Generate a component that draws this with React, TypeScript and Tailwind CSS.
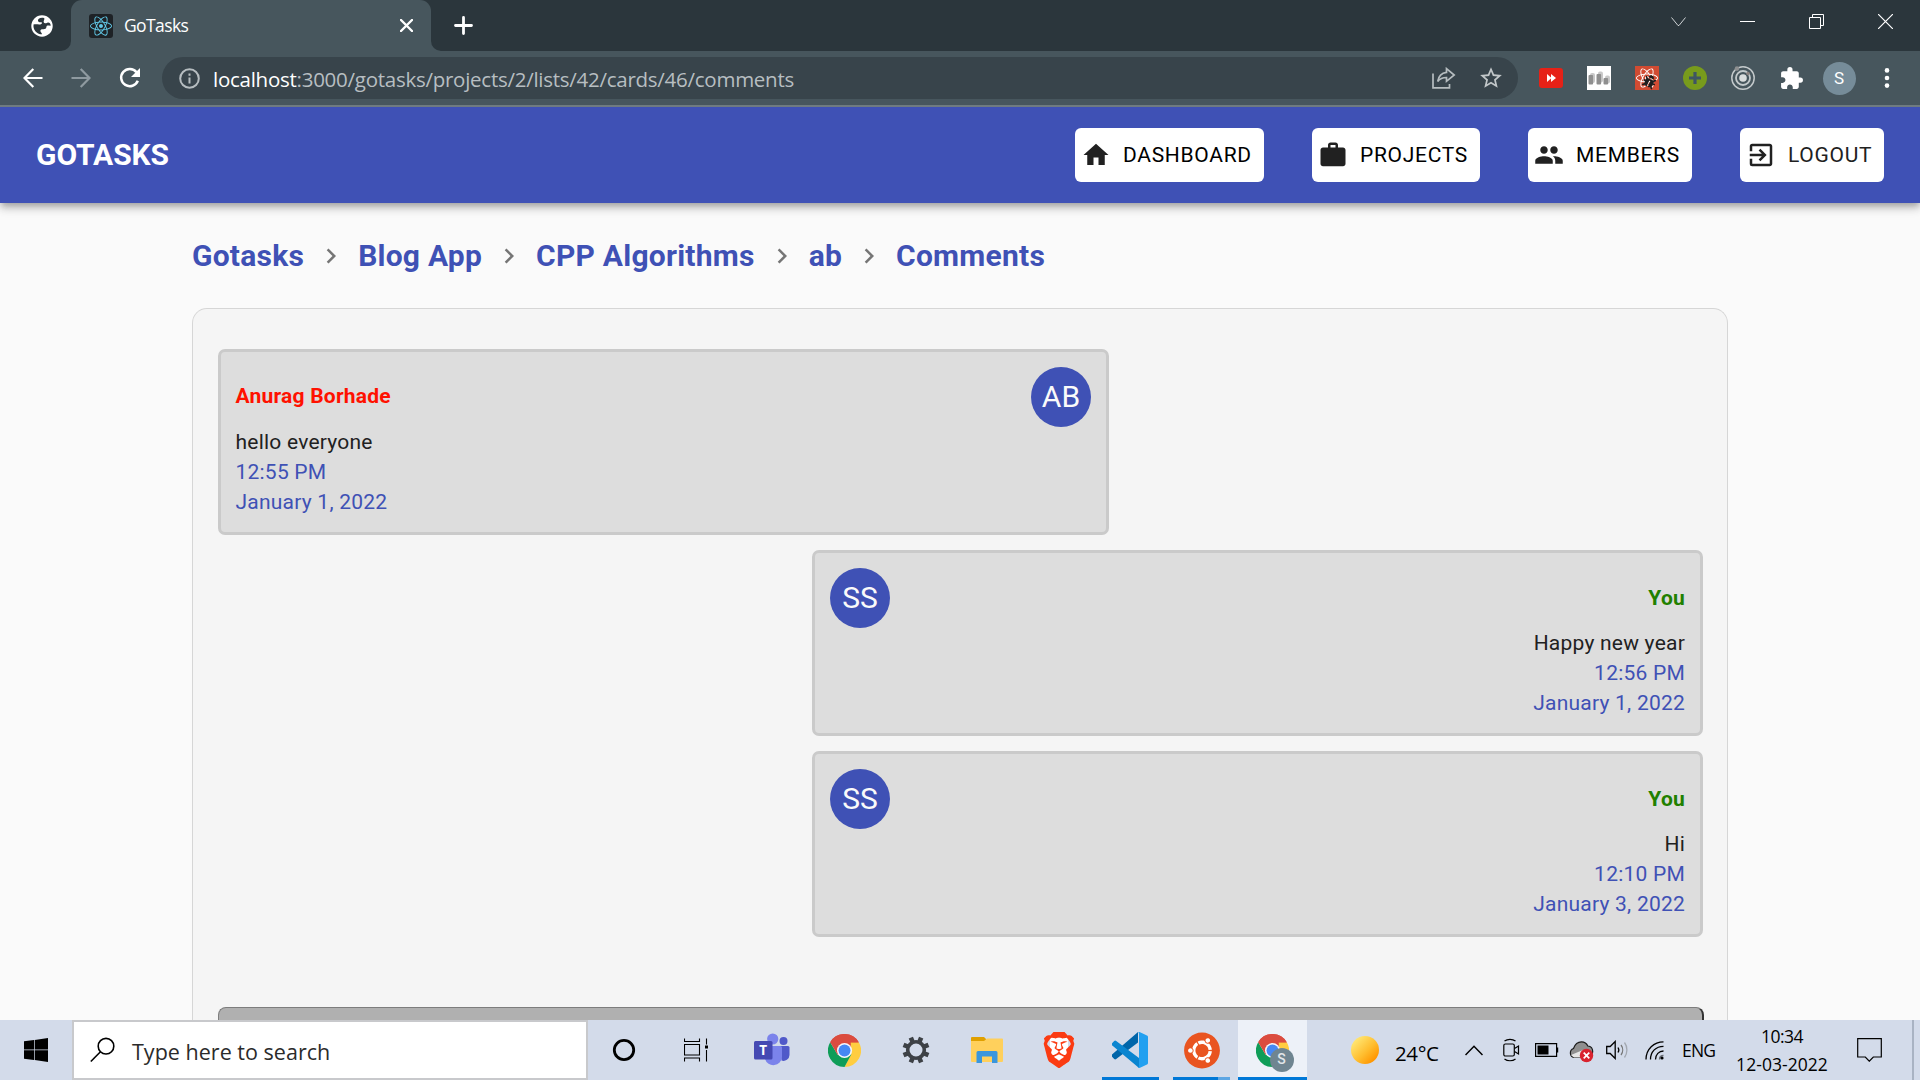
import React from 'react';
import { MdHome, MdWork, MdPeople, MdExitToApp, MdNavigateNext, MdExtension, MdStarBorder } from 'react-icons/md';
import { SiBrave } from 'react-icons/si';
import { FaUbuntu, FaReact, FaBug } from 'react-icons/fa';

const segoe = "font-['Open_Sans','Noto_Sans',sans-serif]";

/* ---------- Browser chrome ---------- */

function WindowControls() {
  const stroke = { fill: 'none', stroke: '#fff', strokeWidth: 1 };
  return (
    <div className="flex h-[43px]">
      <div className="flex w-[69px] items-center justify-center">
        <svg width="15" height="15" viewBox="0 0 15 15" {...stroke}><path d="M.5 3.5l6.5 8h1l6.5-8" stroke="#cfd3d5" /></svg>
      </div>
      <div className="flex w-[69px] items-center justify-center">
        <div className="h-px w-[15px] bg-white" />
      </div>
      <div className="flex w-[69px] items-center justify-center">
        <svg width="15" height="15" viewBox="0 0 15 15" {...stroke}><path d="M.5 3.5h11v11h-11zM3.500 3.500v-3h11v11h-3" /></svg>
      </div>
      <div className="flex w-[69px] items-center justify-center">
        <svg width="15" height="15" viewBox="0 0 15 15" {...stroke} strokeWidth={1.2}><path d="M0 0l15 15M15 0L0 15" /></svg>
      </div>
    </div>
  );
}

function TabStrip() {
  return (
    <div className="flex h-[51px] bg-[linear-gradient(#2b363c_50%,#47565d_50%)]">
      <div className="flex w-[71px] items-center rounded-br-[10px] bg-[#2b363c] pl-[31px]">
        <svg width="22" height="22" viewBox="0 0 22 22">
          <circle cx="11" cy="11" r="10.7" fill="#fff" />
          <path d="M13 3C9 2.200 6.500 4 7 6c.4 1.600 2.500 1 3.500 1.300.9.400.5 1.700-.6 2-2 .5-4.500-.3-7.400.2C2 13 3.500 16 6 17.800c1.700 1.200 3.500 1.600 5 1.500 0-1.600-1.700-2-1.600-3.500.1-1.400 1.500-1.700 3-1.600 1.800 0 2.900-.7 3-2.200.1-1.300 1-1.600 2.300-1.500l2 .2c-.1-2.200-1.200-3.200-2.700-3.100-1.300.1-1.500.9-2.800.7-1.500-.3-1.900-1.600-1.300-2.800.4-.9.9-2 .1-2.500z" fill="#2b363c" />
        </svg>
      </div>
      <div className="flex w-[360px] items-center rounded-t-[11px] bg-[#47565d] pl-[18px] pr-[18px]">
        <div className="flex size-6 items-center justify-center rounded-[3px] bg-[#1e2226] text-[#61c9e8]">
          <FaReact size={22} />
        </div>
        <span className={"ml-[11px] flex-1 whitespace-nowrap text-[17.5px] tracking-[-0.6px] text-white " + segoe}>GoTasks</span>
        <svg width="13" height="13" viewBox="0 0 13 13"><path d="M1 1l11 11M12 1L1 12" stroke="#fff" strokeWidth="2.4" strokeLinecap="round" /></svg>
      </div>
      <div className="flex flex-1 items-start justify-between rounded-bl-[10px] bg-[#2b363c] pl-[23px]">
        <svg className="mt-4" width="19" height="19" viewBox="0 0 19 19"><path d="M9.500 1.500v16M1.500 9.500h16" stroke="#fff" strokeWidth="2.8" strokeLinecap="round" /></svg>
        <WindowControls />
      </div>
    </div>
  );
}

function ToolCell({ children }: { children: React.ReactNode }) {
  return <div className="flex w-12 shrink-0 items-center justify-center">{children}</div>;
}

function Toolbar() {
  return (
    <div className="flex h-14 items-center border-b-2 border-[#6f7b80] bg-[#47565d] pl-[9px] pr-[9px]">
      <ToolCell>
        <svg width="20" height="20" viewBox="0 0 20 20" fill="none" stroke="#fff" strokeWidth="2.2"><path d="M19.500 10H2M10.300 1L1.500 10l8.800 9" /></svg>
      </ToolCell>
      <ToolCell>
        <svg width="20" height="20" viewBox="0 0 20 20" fill="none" stroke="#8f9aa0" strokeWidth="2.200"><path d="M.5 10H18M9.700 1l8.800 9-8.800 9" /></svg>
      </ToolCell>
      <ToolCell>
        <svg className="ml-px" width="22" height="22" viewBox="0 0 22 22"><path d="M18.800 13.700A8.600 8.600 0 1 1 17.500 5.200" fill="none" stroke="#fff" strokeWidth="2.500" /><path d="M21 1v9h-9z" fill="#fff" /></svg>
      </ToolCell>
      <div className="ml-[9px] flex h-[42px] w-[1356px] items-center rounded-full bg-[#38444b] pl-[17px] pr-[3px]">
        <svg width="21" height="21" viewBox="0 0 21 21"><circle cx="10.500" cy="10.500" r="9.300" fill="none" stroke="#b6bdc0" strokeWidth="2" /><path d="M9.500 9.500h2v6h-2zM9.500 5.500h2v2.200h-2z" fill="#b6bdc0" /></svg>
        <div className={"ml-[13px] flex-1 whitespace-nowrap pt-0.5 text-[20.5px] tracking-[-0.26px] text-[#b7bec1] " + segoe}>
          <span className="text-white">localhost</span>:3000/gotasks/projects/2/lists/42/cards/46/comments
        </div>
        <ToolCell>
          <svg className="ml-0.5" width="24" height="22" viewBox="0 0 24 22" fill="none" stroke="#b6bdc0" strokeWidth="1.700"><path d="M1 6.500V20.800h16.500V17" /><path d="M14.500 1.600L22.200 8l-7.700 6.300v-3.800c-4 0-6.500 1-8.800 4C6.500 9.500 9.500 6 14.500 5.400z" /></svg>
        </ToolCell>
        <ToolCell><MdStarBorder size={26} color="#c2c7c9" /></ToolCell>
      </div>
      <div className="ml-[9px] flex">
        <ToolCell>
          <div className="flex h-5 w-6 items-center justify-center rounded-[3px] bg-[#e62117]">
            <svg width="9" height="8" viewBox="0 0 9 8"><path d="M0 0l4.500 4L0 8zM4 0l5 4-5 4z" fill="#fff" /></svg>
          </div>
        </ToolCell>
        <ToolCell>
          <svg width="24" height="24" viewBox="0 0 24 24">
            <rect width="24" height="24" fill="#fff" />
            <g fill="#c9c9c9"><rect x="3" y="7" width="5" height="10" rx="2" /><rect x="11" y="5.500" width="5" height="11" rx="2" /><rect x="18" y="9.500" width="5" height="8" rx="2" /></g>
            <g fill="#8f8f8f"><rect x="1.500" y="9" width="4.600" height="9.500" rx="1" /><rect x="9.500" y="8" width="4.600" height="10.500" rx="1" /><rect x="16.500" y="12" width="4.600" height="6.500" rx="1" /></g>
          </svg>
        </ToolCell>
        <ToolCell>
          <div className="relative flex size-6 items-center justify-center bg-[#d14b32] text-white">
            <FaReact size={22} />
            <FaBug className="absolute left-[8px] top-[9px] rotate-[25deg] text-[#1e1e1e]" size={13} />
          </div>
        </ToolCell>
        <ToolCell>
          <svg width="24" height="24" viewBox="0 0 24 24"><circle cx="12" cy="12" r="12" fill="#789b1c" /><path d="M12 6v12M6 12h12" stroke="#3f5563" strokeWidth="3.200" /></svg>
        </ToolCell>
        <ToolCell>
          <svg width="24" height="24" viewBox="0 0 24 24" fill="none" stroke="#c3c9cb"><circle cx="12" cy="12" r="11.200" strokeWidth="1.500" /><circle cx="12" cy="12" r="7" strokeWidth="1.800" /><circle cx="12" cy="12" r="3.800" fill="#dadddd" stroke="none" /><circle cx="6" cy="2.600" r="2.300" fill="#8d8f90" stroke="none" /><circle cx="17" cy="7.500" r="1.800" fill="#8d8380" stroke="none" /></svg>
        </ToolCell>
        <ToolCell><MdExtension size={25} color="#fff" /></ToolCell>
        <ToolCell>
          <div className="flex size-[33px] items-center justify-center rounded-full bg-[#768c99] pt-px font-[Roboto] text-[17px] text-white">S</div>
        </ToolCell>
        <ToolCell>
          <svg width="6" height="20" viewBox="0 0 6 20" fill="#fff"><circle cx="3" cy="2.400" r="2.300" /><circle cx="3" cy="10" r="2.300" /><circle cx="3" cy="17.600" r="2.300" /></svg>
        </ToolCell>
      </div>
    </div>
  );
}

/* ---------- GoTasks page ---------- */

const navItems = [
  { label: 'DASHBOARD', Icon: MdHome, width: 'w-[189px]', color: 'text-black' },
  { label: 'PROJECTS', Icon: MdWork, width: 'w-[168px]', color: 'text-black' },
  { label: 'MEMBERS', Icon: MdPeople, width: 'w-[164px]', color: 'text-black' },
  { label: 'LOGOUT', Icon: MdExitToApp, width: 'w-[144px]', color: 'text-[#212121]' },
];

function AppBar() {
  return (
    <header className="relative z-10 flex h-24 shrink-0 items-center justify-between bg-[#3f51b5] px-9 shadow-[0_3px_6px_-1.5px_rgba(0,0,0,0.2),0_6px_7.5px_0_rgba(0,0,0,0.14),0_1.5px_15px_0_rgba(0,0,0,0.12)]">
      <h1 className="pb-0.5 text-[30px] font-bold tracking-[-0.05px] text-white">GOTASKS</h1>
      <nav className="flex gap-12">
        {navItems.map(({ label, Icon, width, color }) => (
          <button key={label} className={`flex h-[54px] items-center gap-3 whitespace-nowrap rounded-[6px] bg-white pl-1.5 text-[21px] tracking-[0.7px] ${width} ${color}`}>
            <Icon size={30} className="shrink-0 text-[#212121]" />
            <span className="pt-0.5">{label}</span>
          </button>
        ))}
      </nav>
    </header>
  );
}

const crumbs = ['Gotasks', 'Blog App', 'CPP Algorithms', 'ab', 'Comments'];

function Breadcrumbs() {
  return (
    <nav className="mt-7 flex h-[49px] items-center text-[30px] font-bold tracking-[0.24px] text-[#3f51b5]">
      {crumbs.map((crumb, i) => (
        <React.Fragment key={crumb}>
          {i > 0 && <MdNavigateNext size={30} className="mx-3 text-[#757575]" />}
          <span className="whitespace-nowrap">{crumb}</span>
        </React.Fragment>
      ))}
    </nav>
  );
}

const comments = [
  { author: 'Anurag Borhade', initials: 'AB', text: 'hello everyone', time: '12:55 PM', date: 'January 1, 2022', own: false },
  { author: 'You', initials: 'SS', text: 'Happy new year', time: '12:56 PM', date: 'January 1, 2022', own: true },
  { author: 'You', initials: 'SS', text: 'Hi', time: '12:10 PM', date: 'January 3, 2022', own: true },
];

function CommentCard({ author, initials, text, time, date, own }: (typeof comments)[number]) {
  return (
    <article className={`h-[186px] w-[891px] rounded-[7px] border-[3px] border-[#cacaca] bg-[#dddddd] py-[15px] pr-[15px] text-[21px] leading-[30px] tracking-[0.225px] text-[#212121] ${own ? 'self-end pl-[15px] text-right' : 'self-start pl-[14.5px]'}`}>
      <div className={`flex items-center justify-between ${own ? 'flex-row-reverse' : ''}`}>
        <span className={`font-bold ${own ? 'text-[#218000]' : 'pb-0.5 text-[#ff1100]'}`}>{author}</span>
        <span className="flex size-[60px] items-center justify-center rounded-full bg-[#3f51b5] text-[30px] tracking-normal text-[#fafafa]">{initials}</span>
      </div>
      <p>{text}</p>
      <p className="text-[#3f51b5]">{time}</p>
      <p className="text-[#3f51b5]">{date}</p>
    </article>
  );
}

function Page() {
  return (
    <div className="flex h-[913px] flex-col overflow-hidden bg-[#fafafa] font-[Roboto,sans-serif]">
      <AppBar />
      <main className="mx-auto flex w-[1536px] flex-1 flex-col">
        <Breadcrumbs />
        <section className="mt-7 flex flex-1 flex-col gap-[15px] rounded-t-[15px] border border-b-0 border-[#d6d6d6] bg-[#f5f5f5] pl-[25px] pr-6 pt-10">
          {comments.map((c) => <CommentCard key={c.date + c.time} {...c} />)}
          <div className="-mr-px mt-[55px] h-[13px] rounded-t-[8px] border border-b-0 border-r-2 border-[#7d7d7d] border-r-[#333] bg-[#b0b0b0]" />
        </section>
      </main>
    </div>
  );
}

/* ---------- Taskbar ---------- */

function ChromeLogo({ size }: { size: number }) {
  return (
    <svg width={size} height={size} viewBox="0 0 48 48">
      <path d="M24 24L3.200 12A24 24 0 0 1 44.800 12z" fill="#db4c3f" />
      <path d="M44.800 12A24 24 0 0 1 24 48L34 28.500 33 12z" fill="#ffcd40" />
      <path d="M3.200 12A24 24 0 0 0 24 48L34 29.500 24 34 14 30z" fill="#0f9d58" />
      <path d="M24 24h10.500L24 12.500h20.900A24 24 0 0 0 3.200 12L14 30z" fill="#db4c3f" />
      <circle cx="24" cy="24" r="11" fill="#f4f6fb" />
      <circle cx="24" cy="24" r="8.700" fill="#4688f4" />
    </svg>
  );
}

function TeamsLogo() {
  return (
    <svg className="mr-0.5" width="36" height="34" viewBox="0 0 36 34">
      <circle cx="29.500" cy="8" r="4" fill="#5059c9" />
      <path d="M26 13h8a1.500 1.500 0 0 1 1.500 1.500V22a6 6 0 0 1-8 5.500z" fill="#5059c9" />
      <circle cx="18.700" cy="6" r="5.600" fill="#7b83eb" />
      <path d="M11 13h15.500a1.500 1.500 0 0 1 1.500 1.500V24a8.700 8.700 0 0 1-17 2z" fill="#7b83eb" />
      <rect y="8" width="18.500" height="18.500" rx="1.500" fill="#4549b3" />
      <text x="9.200" y="22" textAnchor="middle" fontFamily="Open Sans" fontWeight="700" fontSize="13.500" fill="#fff">T</text>
    </svg>
  );
}

function Gear() {
  return (
    <svg width="28" height="28" viewBox="0 0 28 28">
      <g stroke="#3d4146" strokeWidth="4.600">
        {[22.5, 67.5, 112.5, 157.5].map((a) => <path key={a} d="M14 .5v5.500M14 22v5.500" transform={`rotate(${a} 14 14)`} />)}
      </g>
      <circle cx="14" cy="14" r="8.300" fill="none" stroke="#3d4146" strokeWidth="3.600" />
    </svg>
  );
}

function FolderIcon() {
  return (
    <svg width="32" height="28" viewBox="0 0 32 28">
      <path d="M0 2a1 1 0 0 1 1-1h12l2 2v3H0z" fill="#e0a000" />
      <path d="M0 5h13l3-2.500h15a1 1 0 0 1 1 1V25a1 1 0 0 1-1 1H1a1 1 0 0 1-1-1z" fill="#ffd05c" />
      <path d="M5.500 27V16.500a1.500 1.500 0 0 1 1.500-1.500h18a1.500 1.500 0 0 1 1.500 1.500V27H21v-6.500h-10V27z" fill="#3a96dd" />
    </svg>
  );
}

function VsCodeLogo() {
  return (
    <svg width="36" height="36" viewBox="0 0 36 36">
      <path d="M0 22.500L26 0v10.500L4.200 27a1.500 1.500 0 0 1-2 0L.3 25a1.600 1.600 0 0 1-.3-2.500z" fill="#0065a9" />
      <path d="M.3 11l1.900-2a1.500 1.500 0 0 1 2 0L27 26v10L.3 13.500a1.600 1.600 0 0 1 0-2.500z" fill="#0a85d0" />
      <path d="M26 .2L27.500 0 35 3.500a1.700 1.700 0 0 1 1 1.600v25.800a1.700 1.700 0 0 1-1 1.600L27.500 36l-2-.5c1 .2 1.500-.3 1.500-1.300V1.800c0-1-.4-1.500-1-1.600z" fill="#22a0f0" />
    </svg>
  );
}

function TaskCell({ children, bar }: { children: React.ReactNode; bar?: React.ReactNode }) {
  return (
    <div className="flex h-full w-[71.5px] shrink-0 flex-col items-center">
      <div className="flex h-[57px] items-center justify-center pt-[3px]">{children}</div>
      {bar}
    </div>
  );
}

function Taskbar() {
  return (
    <footer className={"flex h-[60px] bg-[#d3dbea] text-black " + segoe}>
      <div className="flex w-[72px] items-center justify-center pr-px">
        <svg className="ml-px" width="24" height="24" viewBox="0 0 24 24"><path d="M0 3.300l10-1.300v9.600H0zM10.700 1.900L24 0v11.600H10.700zM0 12.300h10V22L0 20.700zM10.700 12.300H24V24l-13.300-1.900z" /></svg>
      </div>
      <div className="flex w-[516px] items-center border-2 border-[#c8c9cc] bg-white pl-4">
        <svg width="26" height="26" viewBox="0 0 26 26" fill="none" stroke="#000" strokeWidth="1.600"><circle cx="16" cy="9.200" r="7.800" /><path d="M10.500 14.800L.8 24.500" /></svg>
        <span className="ml-4 whitespace-nowrap pt-1 text-[21.5px] tracking-[0.02px] text-[#2b2b2b]">Type here to search</span>
      </div>
      <div className="flex w-[72px] items-center justify-center">
        <svg width="24" height="24" viewBox="0 0 24 24"><circle cx="12" cy="12" r="9.700" fill="none" stroke="#000" strokeWidth="2.800" /></svg>
      </div>
      <div className="flex w-[77px] items-center justify-center pr-[5px]">
        <svg width="24" height="24" viewBox="0 0 24 24" fill="none" stroke="#000" strokeWidth="1.100"><path d="M.5 6.500h15v10.500H.5zM.5 .5v3h15v-3M.5 23.500v-3.500h15v3.500M22.500 .5v6M22.500 12v11.500" /><path d="M21 7.500h3v3h-3z" fill="#000" stroke="none" /></svg>
      </div>
      <TaskCell><TeamsLogo /></TaskCell>
      <TaskCell><ChromeLogo size={33} /></TaskCell>
      <TaskCell><Gear /></TaskCell>
      <TaskCell><FolderIcon /></TaskCell>
      <TaskCell>
        <div className="relative flex size-9 items-center justify-center text-[#fb3b12]">
          <div className="absolute left-[9px] top-[6px] h-[22px] w-[18px] rounded-b-full bg-white" />
          <SiBrave className="relative" size={36} />
        </div>
      </TaskCell>
      <TaskCell bar={<div className="h-[3px] w-[57px] bg-[#0078d7]" />}><VsCodeLogo /></TaskCell>
      <TaskCell bar={<div className="flex h-[3px] w-[57px] bg-[#5ea6e3]"><div className="w-[45px] bg-[#0078d7]" /></div>}>
        <div className="relative flex size-9 items-center justify-center">
          <div className="absolute size-8 rounded-full bg-white" />
          <FaUbuntu className="relative text-[#e95420]" size={37} />
        </div>
      </TaskCell>
      <div className="flex h-full w-[70.5px] justify-end">
        <div className="mr-px flex w-[69px] flex-col border-b-[3px] border-[#0078d7] bg-[#edf1f8]">
          <div className="flex flex-1 items-center justify-center pt-[3px]">
            <div className="relative ml-[-1px]">
              <ChromeLogo size={33} />
              <div className="absolute left-[14px] top-[14px] flex size-6 items-center justify-center rounded-full bg-[#6f8591] font-[Roboto] text-[14px] font-medium text-[#e1e6e9]">S</div>
            </div>
          </div>
        </div>
      </div>
      <div className="ml-[43px] flex items-center">
        <div className="size-7 rounded-full bg-[linear-gradient(135deg,#ffe571_15%,#ffbd2e_55%,#ff9500_85%)]" />
        <span className="ml-4 w-[44px] whitespace-nowrap pt-1.5 text-[20.5px] tracking-[-0.4px]">24°C</span>
        <svg className="ml-[26px]" width="18" height="11" viewBox="0 0 18 11" fill="none" stroke="#000" strokeWidth="1.500"><path d="M.5 10L9 1.300 17.500 10" /></svg>
        <svg className="ml-5" width="17" height="24" viewBox="0 0 17 24" fill="none" stroke="#000" strokeWidth="1.200"><rect x=".8" y="6" width="10.500" height="12" rx="1.500" /><path d="M11.500 10.500l4-2.500v8l-4-2.500M1.500 3c3-2.300 8-2.300 11 0M1.500 21c3 2.300 8 2.300 11 0" /></svg>
        <svg className="ml-[15px]" width="24" height="14" viewBox="0 0 24 14"><path d="M.6 .6h21v12.800H.6z" fill="none" stroke="#000" strokeWidth="1.200" /><path d="M2.500 2.500h11v9h-11zM21.500 4.500h1.700v5h-1.700z" /></svg>
        <svg className="ml-[10px] mt-1" width="25" height="22" viewBox="0 0 25 22">
          <path d="M5 16.500A4.700 4.700 0 0 1 4.500 7.500C6 3 9 .8 12.500 .8c3 0 5.300 1.800 6.300 4.200 3 .3 4.900 2.600 4.900 5.500s-2 6-5 6z" fill="#8f8f8f" stroke="#1d1d1d" strokeWidth="1.200" />
          <path d="M2 14l12-5 5 7.500H5z" fill="#e6e6e6" />
          <circle cx="17.500" cy="14.500" r="6.700" fill="#d9232e" />
          <path d="M14.700 11.700l5.600 5.600M20.300 11.700l-5.600 5.600" stroke="#fff" strokeWidth="1.700" />
        </svg>
        <svg className="ml-3" width="23" height="20" viewBox="0 0 23 20" fill="none" stroke="#000" strokeWidth="1.300"><path d="M.7 6.500h3.500l5-5v17l-5-5H.7z" /><path d="M12 7.500c1 1.500 1 3.500 0 5" /><path d="M15 5c2.200 2.800 2.200 7 0 10" stroke="#777" /><path d="M18.500 2.500c3.200 4.300 3.200 10.500 0 15" stroke="#a3a8b0" /></svg>
        <svg className="ml-4" width="20" height="19" viewBox="0 0 20 19" fill="none" stroke="#000" strokeWidth="1.300"><path d="M1 18.500C1 8 9 .8 18.500 .8M5.500 18.500C5.500 10.500 11 5.300 18.500 5.300M10.500 18.500c0-5 3.500-8.500 8-8.500" /><path d="M14.500 18.500c0-2.500 1.500-4 4-4" opacity=".5" /><circle cx="17" cy="17" r="1.600" fill="#000" stroke="none" /></svg>
        <span className="ml-[17px] w-[34px] whitespace-nowrap text-[17.500px] tracking-[-0.8px]">ENG</span>
        <div className="ml-5 w-[92px] whitespace-nowrap text-center text-[17.500px] leading-7 tracking-[0.050px]">
          <div className="tracking-[-0.500px]">10:34</div>
          <div>12-03-2022</div>
        </div>
        <svg className="ml-[29px]" width="25" height="24" viewBox="0 0 25 24" fill="none" stroke="#000" strokeWidth="1.200"><path d="M.7 .7h23.600v18.300h-8l-4 4.200-4-4.200H.7z" /></svg>
      </div>
      <div className="ml-auto mr-1.5 w-0.5 bg-[#a9b3c3]" />
    </footer>
  );
}

export default function App() {
  return (
    <div className="h-[1080px] w-[1920px] overflow-hidden">
      <TabStrip />
      <Toolbar />
      <Page />
      <Taskbar />
    </div>
  );
}
